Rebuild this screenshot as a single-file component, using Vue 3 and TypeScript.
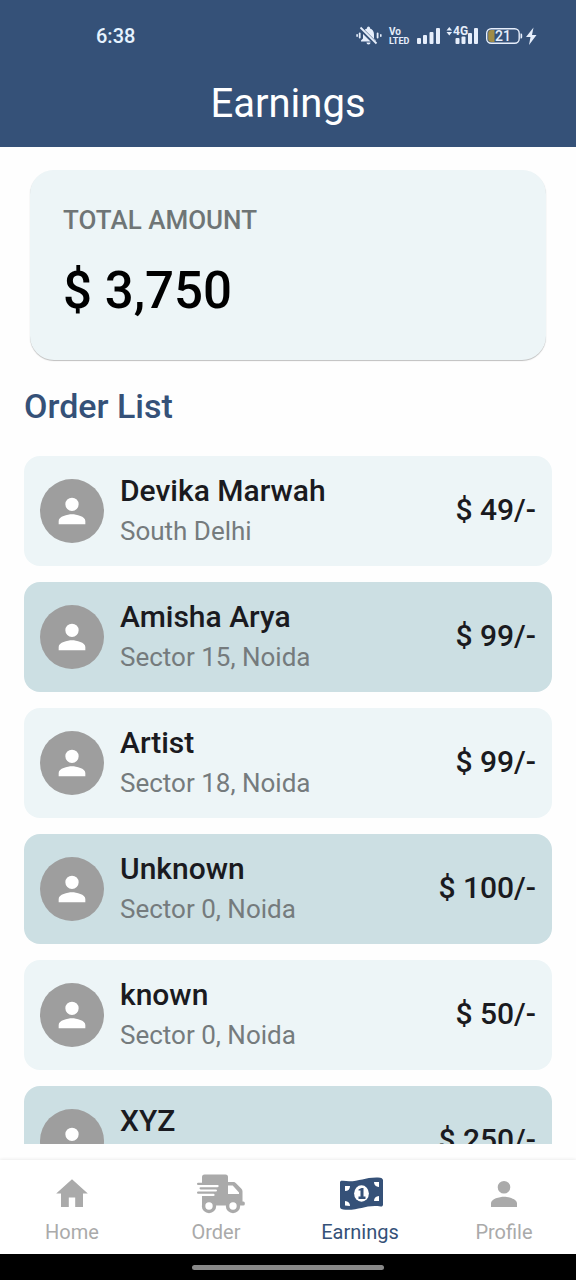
<script setup lang="ts">
import { ref } from 'vue'

interface Order {
  name: string
  place: string
  amount: number
}

type Tab = 'Home' | 'Order' | 'Earnings' | 'Profile'

const total = 3750
const orders: Order[] = [
  { name: 'Devika Marwah', place: 'South Delhi', amount: 49 },
  { name: 'Amisha Arya', place: 'Sector 15, Noida', amount: 99 },
  { name: 'Artist', place: 'Sector 18, Noida', amount: 99 },
  { name: 'Unknown', place: 'Sector 0, Noida', amount: 100 },
  { name: 'known', place: 'Sector 0, Noida', amount: 50 },
  { name: 'XYZ', place: 'Sector 0, Noida', amount: 250 },
]
const tabs: Tab[] = ['Home', 'Order', 'Earnings', 'Profile']
const active = ref<Tab>('Earnings')
</script>

<template>
  <div class="screen">
    <header class="top">
      <div class="status">
        <span class="clock">6:38</span>
        <svg class="status-icons" viewBox="0 0 184 24" aria-hidden="true">
          <g fill="#e6eefb">
            <path d="M5 17.500v-1l2-2v-4c0-3.300 1.600-5.300 4-5.900V4a1.500 1.500 0 0 1 3 0v.6c2.400.6 4 2.600 4 5.900v4l2 2v1zM10.500 18.500h4a2 2 0 0 1-4 0z" />
            <rect x="2.800" y="8.500" width="1.800" height="6" rx=".9" />
            <rect x="0.300" y="10" width="1.600" height="3" rx=".8" />
            <rect x="20.700" y="8.500" width="1.800" height="6" rx=".9" />
            <rect x="24" y="10" width="1.600" height="3" rx=".8" />
            <rect x="61" y="14" width="4" height="6" rx="1" />
            <rect x="67" y="11" width="4" height="9" rx="1" />
            <rect x="73.500" y="8" width="4" height="12" rx="1" />
            <rect x="80" y="4" width="4" height="16" rx="1" />
            <path d="M90.500 6.500l2.800-3.500 2.800 3.500zM90.500 8l2.800 3.500 2.800-3.500z" />
            <rect x="99.500" y="14" width="4" height="6" rx="1" />
            <rect x="105.500" y="12.500" width="4" height="7.500" rx="1" />
            <rect x="112" y="9" width="4" height="11" rx="1" />
            <rect x="118" y="4" width="4" height="16" rx="1" />
            <path d="M164.500 9.500h.5a1.200 1.200 0 0 1 1.200 1.200v2.600a1.200 1.200 0 0 1-1.200 1.200h-.5zM177.500 3.500l-7.500 9.500h4.500l-1.500 8 7.500-10h-4.500z" />
          </g>
          <path d="M4.500 4.500l16 16" stroke="#355178" stroke-width="4" />
          <path d="M4.500 3.500l16 16" stroke="#e6eefb" stroke-width="1.800" />
          <rect x="130.700" y="4.700" width="32.500" height="14.500" rx="4.500" fill="none" stroke="#e6eefb" stroke-width="1.400" />
          <path d="M138.500 6v12h-3a3.300 3.300 0 0 1-3.300-3.300V9.300a3.300 3.300 0 0 1 3.300-3.300z" fill="#a08c46" />
          <g class="status-text">
            <text x="33" y="10.500" font-size="10">Vo</text>
            <text x="33" y="20" font-size="9">LTED</text>
            <text x="97" y="11" font-size="12">4G</text>
            <text class="level" x="139" y="17" font-size="14">21</text>
          </g>
        </svg>
      </div>
      <h1>Earnings</h1>
    </header>

    <main>
      <section class="total">
        <h2>TOTAL AMOUNT</h2>
        <p>$ {{ total.toLocaleString('en-US') }}</p>
      </section>

      <h2 class="list-title">Order List</h2>
      <ul class="orders">
        <li v-for="order in orders" :key="order.name" class="order">
          <span class="avatar">
            <svg viewBox="0 0 24 24" aria-hidden="true">
              <path d="M12 12a4 4 0 1 0 0-8 4 4 0 0 0 0 8zm0 2c-2.670 0-8 1.340-8 4v2h16v-2c0-2.660-5.330-4-8-4z" />
            </svg>
          </span>
          <div class="who">
            <h3>{{ order.name }}</h3>
            <p>{{ order.place }}</p>
          </div>
          <span class="amount">$ {{ order.amount }}/-</span>
        </li>
      </ul>
    </main>

    <nav class="tabs">
      <button
        v-for="tab in tabs"
        :key="tab"
        type="button"
        :class="{ active: tab === active }"
        @click="active = tab"
      >
        <svg v-if="tab === 'Home'" viewBox="0 0 48 40" aria-hidden="true">
          <path d="M20.800 33v-9.600h6.400V33h7.800V19.500h4.800L24 5.300 8.200 19.500H13V33z" />
        </svg>
        <svg v-else-if="tab === 'Order'" viewBox="-5 0 48 40" aria-hidden="true">
          <path fill-rule="evenodd" d="M7.500 .5h21a2.500 2.500 0 0 1 2.500 2.500v5h5.200c1.200 0 2 .4 2.800 1.200l5.200 5.300c.8.800 1.300 1.800 1.300 3V27.500h.8a1.500 1.500 0 0 1 1.500 1.500v1a1.500 1.500 0 0 1-1.500 1.500H5V22h11.500a1.100 1.100 0 0 0 0-2.200H1.100a1.100 1.100 0 0 1 0-2.200h17.800a1.100 1.100 0 0 0 0-2.200H3.600a1.100 1.100 0 0 1 0-2.200h17a1.100 1.100 0 0 0 0-2.200H1.100a1.100 1.100 0 0 1 0-2.200H5V3A2.500 2.500 0 0 1 7.500 .5zM31 11.500v8.500h11v-1.500l-6.300-7z" />
          <circle cx="12" cy="32" r="7.200" />
          <circle cx="36" cy="32" r="7.200" />
          <circle cx="12" cy="32" r="3.700" fill="#fff" />
          <circle cx="36" cy="32" r="3.700" fill="#fff" />
        </svg>
        <svg v-else-if="tab === 'Earnings'" viewBox="-2 0 48 40" aria-hidden="true">
          <path d="M5 6.800c14 2.200 21-3.800 35-3.300 3.500 .2 5 1.100 5 2.700V30.500c0 1.400-.8 2.100-2.300 2-14-2.200-21 4-35.200 3.300C4 35.500 2 34.800 2 33V8.500C2 7 3 6.500 5 6.800z" />
          <path d="M7 12h5q0 5-5 5zM7 27q5 .5 5 5q-3-.2-5-.6zM41 8v5q-5-.5-5-5q3-.2 5 0zM41 22v5h-5q0-4.500 5-5z" fill="#fff" />
          <ellipse cx="23.500" cy="19.500" rx="7.400" ry="8.300" fill="#fff" />
          <path d="M20.500 15.500l3-1.500h2v8.500h2V25h-7v-2.500h2v-6h-2z" />
        </svg>
        <svg v-else viewBox="0 0 48 40" aria-hidden="true">
          <path d="M24 19.500a6.300 6.300 0 1 0 0-12.600 6.300 6.300 0 0 0 0 12.600zm0 3.200c-4.300 0-13 2.100-13 6.500V33h26v-3.800c0-4.400-8.700-6.500-13-6.500z" />
        </svg>
        <span>{{ tab }}</span>
      </button>
    </nav>
    <footer class="gesture"><span></span></footer>
  </div>
</template>

<style>
body {
  margin: 0;
  background: #fff;
}
</style>

<style scoped>
.screen {
  display: flex;
  flex-direction: column;
  height: 100vh;
  background: #fefefe;
  font-family: Roboto, "Liberation Sans", sans-serif;
}

h1, h2, h3, p, ul {
  margin: 0;
  padding: 0;
}

.top {
  flex: none;
  padding: 24px 36px 20px;
  background: #355178;
  color: #fff;
}

.status {
  display: flex;
  align-items: center;
  justify-content: space-between;
  height: 24px;
  padding-left: 60px;
}

.clock {
  font-size: 20px;
  font-weight: 500;
  color: #e6f3ff;
}

.status-icons {
  width: 184px;
  height: 24px;
}

.status-text {
  fill: #e6eefb;
  font-weight: 700;
}

.level {
  font-weight: 500;
}

h1 {
  margin-top: 32px;
  font-size: 40px;
  font-weight: 400;
  line-height: 47px;
  text-align: center;
}

main {
  display: flex;
  flex: 1;
  flex-direction: column;
  min-height: 0;
  padding: 23px 24px 16px;
}

.total {
  margin: 0 6px;
  padding: 34px 33px 38px;
  border-radius: 24px;
  background: #edf5f7;
  box-shadow: 0 1px 1px rgba(0, 0, 0, 0.25);
}

.total h2 {
  font-size: 26px;
  font-weight: 500;
  line-height: 32px;
  color: #6f7576;
}

.total p {
  margin-top: 24px;
  font-size: 51px;
  font-weight: 500;
  line-height: 62px;
  color: #000;
}

.list-title {
  margin: 26px 0 30px;
  font-size: 34px;
  font-weight: 500;
  line-height: 40px;
  color: #355178;
}

.orders {
  display: flex;
  flex: 1;
  flex-direction: column;
  gap: 16px;
  min-height: 0;
  overflow-y: auto;
  scrollbar-width: none;
  list-style: none;
}

.order {
  display: flex;
  flex: none;
  align-items: center;
  gap: 16px;
  height: 110px;
  padding: 0 16px;
  box-sizing: border-box;
  border-radius: 16px;
  background: #edf5f7;
  color: #1a1a20;
}

.order:nth-child(even) {
  background: #ccdfe3;
}

.avatar {
  display: grid;
  place-items: center;
  width: 64px;
  height: 64px;
  border-radius: 50%;
  background: #9e9e9e;
}

.avatar svg {
  width: 40px;
  height: 40px;
  fill: #fff;
}

.who {
  flex: 1;
}

.who h3 {
  font-size: 30px;
  font-weight: 500;
  line-height: 40px;
}

.who p {
  font-size: 26px;
  line-height: 40px;
  color: #757b7d;
}

.amount {
  padding-bottom: 4px;
  font-size: 30px;
  font-weight: 500;
}

.tabs {
  display: grid;
  flex: none;
  grid-template-columns: repeat(4, 1fr);
  height: 94px;
  background: #fff;
  box-shadow: 0 -1px 3px rgba(0, 0, 0, 0.07);
}

.tabs button {
  display: flex;
  flex-direction: column;
  align-items: center;
  gap: 6px;
  padding: 14px 0 0;
  border: 0;
  background: none;
  color: #aaa;
  font: 400 20px/24px Roboto, "Liberation Sans", sans-serif;
  cursor: pointer;
}

.tabs svg {
  width: 48px;
  height: 40px;
  overflow: visible;
  fill: currentColor;
}

.tabs .active {
  color: #355178;
}

.gesture {
  display: flex;
  flex: none;
  justify-content: center;
  align-items: center;
  height: 26px;
  background: #000;
}

.gesture span {
  width: 192px;
  height: 5px;
  border-radius: 3px;
  background: #888;
}
</style>
